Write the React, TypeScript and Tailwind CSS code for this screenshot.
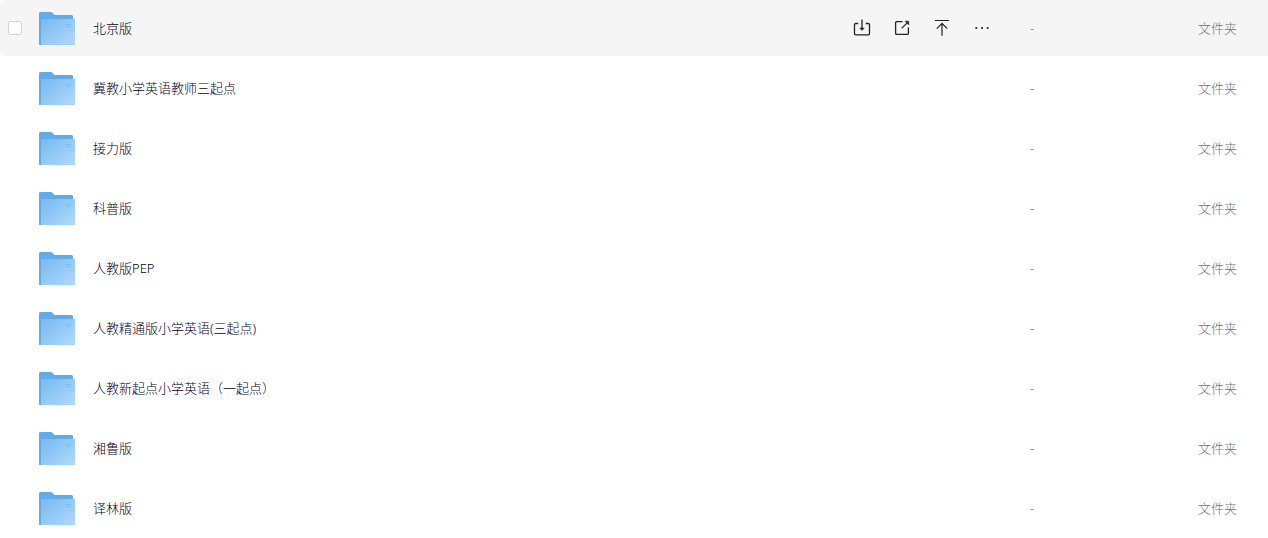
import { useState } from 'react';

const FOLDERS = [
  '北京版',
  '冀教小学英语教师三起点',
  '接力版',
  '科普版',
  '人教版PEP',
  '人教精通版小学英语(三起点)',
  '人教新起点小学英语（一起点）',
  '湘鲁版',
  '译林版',
];

function FolderIcon() {
  return (
    <svg width="36" height="33" viewBox="0 0 36 33" aria-hidden="true" className="shrink-0">
      <defs>
        <linearGradient id="folder-front" x1="0" y1="0" x2="1" y2="1">
          <stop offset="0" stopColor="#77b9f0" />
          <stop offset="0.5" stopColor="#93c9f6" />
          <stop offset="1" stopColor="#b3dafc" />
        </linearGradient>
      </defs>
      <path d="M0 1.5C0 .6.6 0 1.5 0h10.3c.6 0 1 .2 1.4.6L15.4 3H32.5c.9 0 1.5.6 1.5 1.5V31H3v2H1c-.6 0-1-.4-1-1z" fill="#60abe8" />
      <path d="M2 8c0-.6.4-1 1-1h32c.6 0 1 .4 1 1v24c0 .6-.4 1-1 1H2z" fill="url(#folder-front)" />
      <path d="M2 32.5h33.5" stroke="#9accf4" strokeWidth="0.6" />
      <path d="M27 12.5h5M27 14.5h5" stroke="#78b4e8" strokeWidth="0.7" />
    </svg>
  );
}

function SaveIcon() {
  return (
    <svg width="20" height="20" viewBox="0 0 20 20" fill="none" stroke="currentColor" strokeWidth="1.3" aria-hidden="true">
      <path d="M6.2 5.5H3.7c-.7 0-1.2.5-1.2 1.2v8.9c0 .7.5 1.2 1.2 1.2h12.6c.7 0 1.2-.5 1.2-1.2V6.7c0-.7-.5-1.2-1.2-1.2h-2.5" />
      <path d="M10 1.5V11" />
      <path d="M7.8 10h4.4L10 12.6z" fill="currentColor" strokeWidth="0.5" strokeLinejoin="round" />
    </svg>
  );
}

function ShareIcon() {
  return (
    <svg width="20" height="20" viewBox="0 0 20 20" fill="none" stroke="currentColor" strokeWidth="1.3" aria-hidden="true">
      <path d="M10.5 3.6H4.8c-.7 0-1.2.5-1.2 1.2v10.4c0 .7.5 1.2 1.2 1.2h10.4c.7 0 1.2-.5 1.2-1.2V9.5" />
      <path d="M9.6 10.4l5.8-5.8" />
      <path d="M13 3.2h3.8V7z" fill="currentColor" strokeWidth="0.5" strokeLinejoin="round" />
    </svg>
  );
}

function TopIcon() {
  return (
    <svg width="20" height="20" viewBox="0 0 20 20" fill="none" stroke="currentColor" strokeWidth="1.2" aria-hidden="true">
      <path d="M3 2.5h14M10 17.7V5.5M4.8 10.6L10 5.4l5.2 5.2" />
    </svg>
  );
}

function MoreIcon() {
  return (
    <svg width="20" height="20" viewBox="0 0 20 20" fill="currentColor" aria-hidden="true">
      <circle cx="4.3" cy="10" r="1.1" />
      <circle cx="10" cy="10" r="1.1" />
      <circle cx="15.7" cy="10" r="1.1" />
    </svg>
  );
}

const ACTIONS = [
  { label: '保存', Icon: SaveIcon },
  { label: '分享', Icon: ShareIcon },
  { label: '置顶', Icon: TopIcon },
  { label: '更多', Icon: MoreIcon },
];

export default function App() {
  const [active, setActive] = useState(0);

  return (
    <main className="overflow-hidden bg-white font-['Noto_Sans','Noto_Sans_CJK_SC',sans-serif] text-[13px] leading-5 font-light">
      <table className="-my-1 w-full table-fixed border-separate border-spacing-x-0 border-spacing-y-1">
        <colgroup>
          <col className="w-[39px]" />
          <col />
          <col className="w-[178px]" />
          <col className="w-[168px]" />
          <col className="w-[70px]" />
        </colgroup>
        <tbody>
          {FOLDERS.map((name, i) => {
            const isActive = i === active;
            return (
              <tr key={name} onMouseEnter={() => setActive(i)} className={isActive ? 'h-14 bg-[#f5f5f5]' : 'h-14'}>
                <td className="rounded-l-md p-0 pl-2 align-middle">
                  {isActive && (
                    <input
                      type="checkbox"
                      aria-label={name}
                      className="block size-3.5 appearance-none rounded-xs border border-[#d5d6da] bg-white checked:bg-[#60abe8]"
                    />
                  )}
                </td>
                <td className="p-0 align-middle">
                  <div className="flex items-center gap-[18px]">
                    <FolderIcon />
                    <a href="#" className="truncate text-[#03001a]">
                      {name}
                    </a>
                  </div>
                </td>
                <td className="p-0 align-middle">
                  {isActive && (
                    <div className="flex gap-5 text-[#222328]">
                      {ACTIONS.map(({ label, Icon }) => (
                        <button key={label} type="button" aria-label={label} className="block">
                          <Icon />
                        </button>
                      ))}
                    </div>
                  )}
                </td>
                <td className="p-0 align-middle text-[#72737f]">-</td>
                <td className="p-0 align-middle text-[#72737f]">文件夹</td>
              </tr>
            );
          })}
        </tbody>
      </table>
    </main>
  );
}
